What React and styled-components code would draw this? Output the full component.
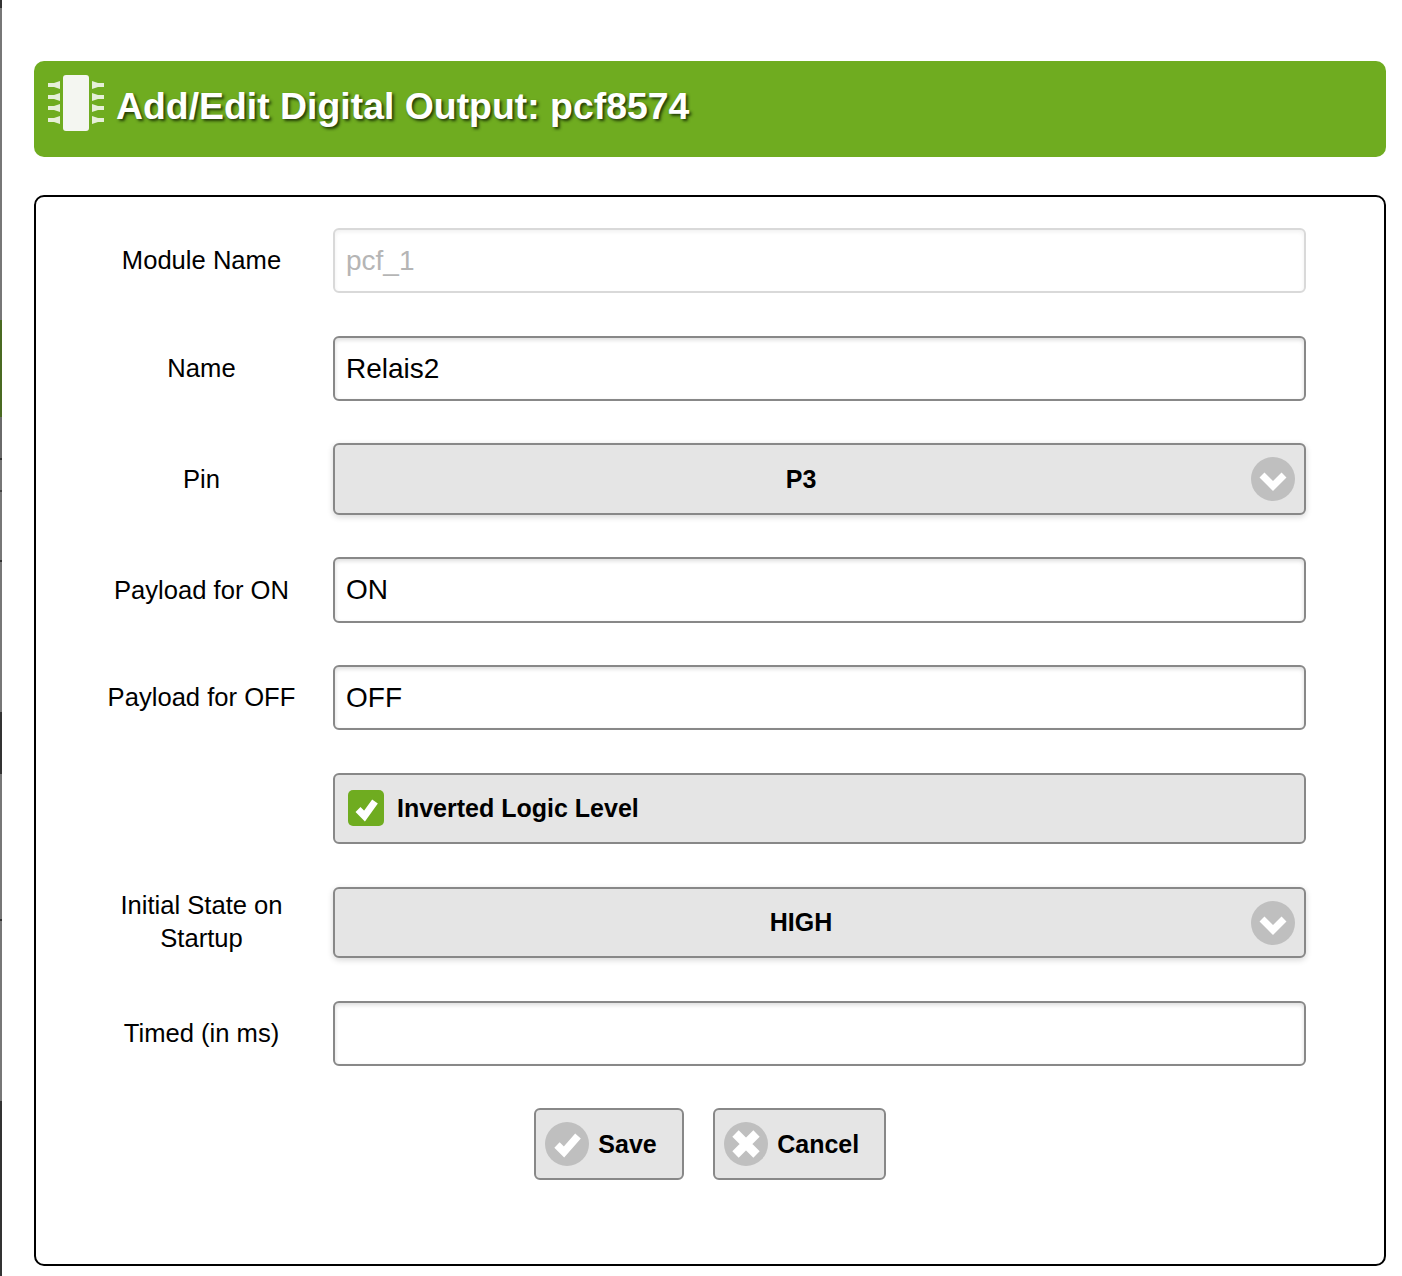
import React from "react";
import styled, { createGlobalStyle } from "styled-components";

const GlobalStyle = createGlobalStyle`
  html, body {
    margin: 0;
    padding: 0;
    background: #fff;
  }
  body {
    font-family: "Liberation Sans", Arial, sans-serif;
    color: #000;
  }
`;

const Page = styled.div`
  display: flex;
  height: 1276px;
  overflow: hidden;
`;

const Strip = styled.div`
  flex: 0 0 2px;
  display: flex;
  flex-direction: column;
`;

const StripPart = styled.div`
  height: ${(p) => p.$h}px;
  background: ${(p) => p.$c};
`;

const Main = styled.div`
  flex: 1;
  padding: 61px 16px 0 32px;
`;

const Header = styled.div`
  height: 96px;
  box-sizing: border-box;
  background: #6fac20;
  border-radius: 10px;
  display: flex;
  align-items: center;
  padding: 0 0 6px 13px;
  gap: 11px;
`;

const Title = styled.h1`
  margin: 0;
  font-size: 37.4px;
  font-weight: 700;
  color: #fff;
  text-shadow: 2px 2px 3px rgba(20, 40, 0, 0.85);
  white-space: nowrap;
`;

const ChipSvg = styled.svg`
  margin-bottom: 6px;
`;

const Panel = styled.div`
  margin-top: 38px;
  height: 1071px;
  box-sizing: border-box;
  border: 2px solid #000;
  border-radius: 10px;
  padding: 31px 78px 0 34px;
  display: flex;
  flex-direction: column;
`;

const Row = styled.div`
  display: grid;
  grid-template-columns: 263px 1fr;
  align-items: center;
  margin-bottom: ${(p) => p.$gap}px;
`;

const Label = styled.label`
  font-size: 25.6px;
  line-height: 33px;
  text-align: center;
  padding: 0 30px;
`;

const Input = styled.input`
  display: block;
  width: 100%;
  height: 65.4px;
  box-sizing: border-box;
  border: 2px solid ${(p) => (p.disabled ? "#d9d9d9" : "#888")};
  border-radius: 6px;
  padding: 0 11px;
  background: #fff;
  font-family: inherit;
  font-size: 28px;
  color: ${(p) => (p.disabled ? "#b5b5b5" : "#000")};
  box-shadow: inset 0 2px 4px rgba(0, 0, 0, ${(p) => (p.disabled ? 0.06 : 0.14)});
  outline: none;
  &:disabled {
    opacity: 1;
    -webkit-text-fill-color: #b5b5b5;
  }
`;

const Select = styled.div`
  position: relative;
  height: 71.6px;
  box-sizing: border-box;
  border: 2px solid #888;
  border-radius: 6px;
  background: #e5e5e5;
  box-shadow: 0 2px 6px rgba(0, 0, 0, 0.16);
  display: flex;
  align-items: center;
  justify-content: center;
  padding-right: 37px;
  font-size: 25px;
  font-weight: 700;
`;

const Arrow = styled.span`
  position: absolute;
  right: 9px;
  top: 12px;
  display: flex;
`;

const CheckRow = styled.div`
  height: 71px;
  box-sizing: border-box;
  border: 2px solid #888;
  border-radius: 6px;
  background: #e5e5e5;
  display: flex;
  align-items: center;
  padding-left: 13px;
  gap: 13px;
  font-size: 25px;
  font-weight: 700;
`;

const CheckBox = styled.span`
  display: flex;
  border-radius: 5px;
  background: #6fac20;
`;

const Buttons = styled.div`
  display: flex;
  justify-content: center;
  gap: 29px;
  margin-left: 44px;
`;

const Button = styled.button`
  height: 72px;
  box-sizing: border-box;
  border: 2px solid #888;
  border-radius: 6px;
  background: #e5e5e5;
  display: flex;
  align-items: center;
  gap: 9.5px;
  padding: 0 25px 0 9px;
  font-family: inherit;
  font-size: 25px;
  font-weight: 700;
  color: #000;
`;

const ChipIcon = () => (
  <ChipSvg width="58" height="58" viewBox="0 0 58 58">
    <rect x="16" y="1" width="26" height="56" rx="3" fill="#f4f6f1" />
    {[11, 23, 34, 46].map((c) => (
      <g key={c} fill="#e6efd8">
        <path d={`M13 ${c - 4}L7 ${c - 2}H1v4H7L13 ${c + 4}z`} />
        <path d={`M45 ${c - 4}L51 ${c - 2}H57v4H51L45 ${c + 4}z`} />
      </g>
    ))}
  </ChipSvg>
);

const ChevronCircle = () => (
  <svg width="44" height="44" viewBox="0 0 44 44">
    <circle cx="22" cy="22" r="22" fill="#bfbfbf" />
    <path d="M11 18l11 11 11-11" fill="none" stroke="#fff" strokeWidth="7" />
  </svg>
);

const BoxCheck = () => (
  <svg width="36" height="36" viewBox="0 0 36 36">
    <path d="M10 19.5l6.5 6.5L27 11.5" fill="none" stroke="#fff" strokeWidth="7" />
  </svg>
);

const CheckCircle = () => (
  <svg width="44" height="44" viewBox="0 0 44 44">
    <circle cx="22" cy="22" r="22" fill="#bfbfbf" />
    <path d="M12 23l7 7 14-16" fill="none" stroke="#fff" strokeWidth="7.5" />
  </svg>
);

const CrossCircle = () => (
  <svg width="44" height="44" viewBox="0 0 44 44">
    <circle cx="22" cy="22" r="22" fill="#bfbfbf" />
    <path d="M11.5 11.5l21 21M32.5 11.5l-21 21" fill="none" stroke="#fff" strokeWidth="9" />
  </svg>
);

const stripParts = [
  [8, "#333"], [312, "#777"], [97, "#4a6a22"], [41, "#6a6a6a"], [2, "#333"], [30, "#777"],
  [2, "#444"], [68, "#777"], [2, "#333"], [150, "#777"], [62, "#333"], [145, "#777"],
  [2, "#333"], [180, "#777"], [175, "#333"],
];

const App = () => {
  return (
    <Page>
      <GlobalStyle />
      <Strip>
        {stripParts.map(([h, c], i) => (
          <StripPart key={i} $h={h} $c={c} />
        ))}
      </Strip>
      <Main>
        <Header>
          <ChipIcon />
          <Title>Add/Edit Digital Output: pcf8574</Title>
        </Header>
        <Panel>
          <Row $gap={42.6}>
            <Label>Module Name</Label>
            <Input disabled value="pcf_1" readOnly />
          </Row>
          <Row $gap={42}>
            <Label>Name</Label>
            <Input value="Relais2" readOnly />
          </Row>
          <Row $gap={42.4}>
            <Label>Pin</Label>
            <Select>
              P3
              <Arrow><ChevronCircle /></Arrow>
            </Select>
          </Row>
          <Row $gap={42.2}>
            <Label>Payload for ON</Label>
            <Input value="ON" readOnly />
          </Row>
          <Row $gap={42.6}>
            <Label>Payload for OFF</Label>
            <Input value="OFF" readOnly />
          </Row>
          <Row $gap={42.6}>
            <span />
            <CheckRow>
              <CheckBox><BoxCheck /></CheckBox>
              Inverted Logic Level
            </CheckRow>
          </Row>
          <Row $gap={42.8}>
            <Label>Initial State on Startup</Label>
            <Select>
              HIGH
              <Arrow><ChevronCircle /></Arrow>
            </Select>
          </Row>
          <Row $gap={41.8}>
            <Label>Timed (in ms)</Label>
            <Input value="" readOnly />
          </Row>
          <Buttons>
            <Button><CheckCircle />Save</Button>
            <Button><CrossCircle />Cancel</Button>
          </Buttons>
        </Panel>
      </Main>
    </Page>
  );
};

export default App;
